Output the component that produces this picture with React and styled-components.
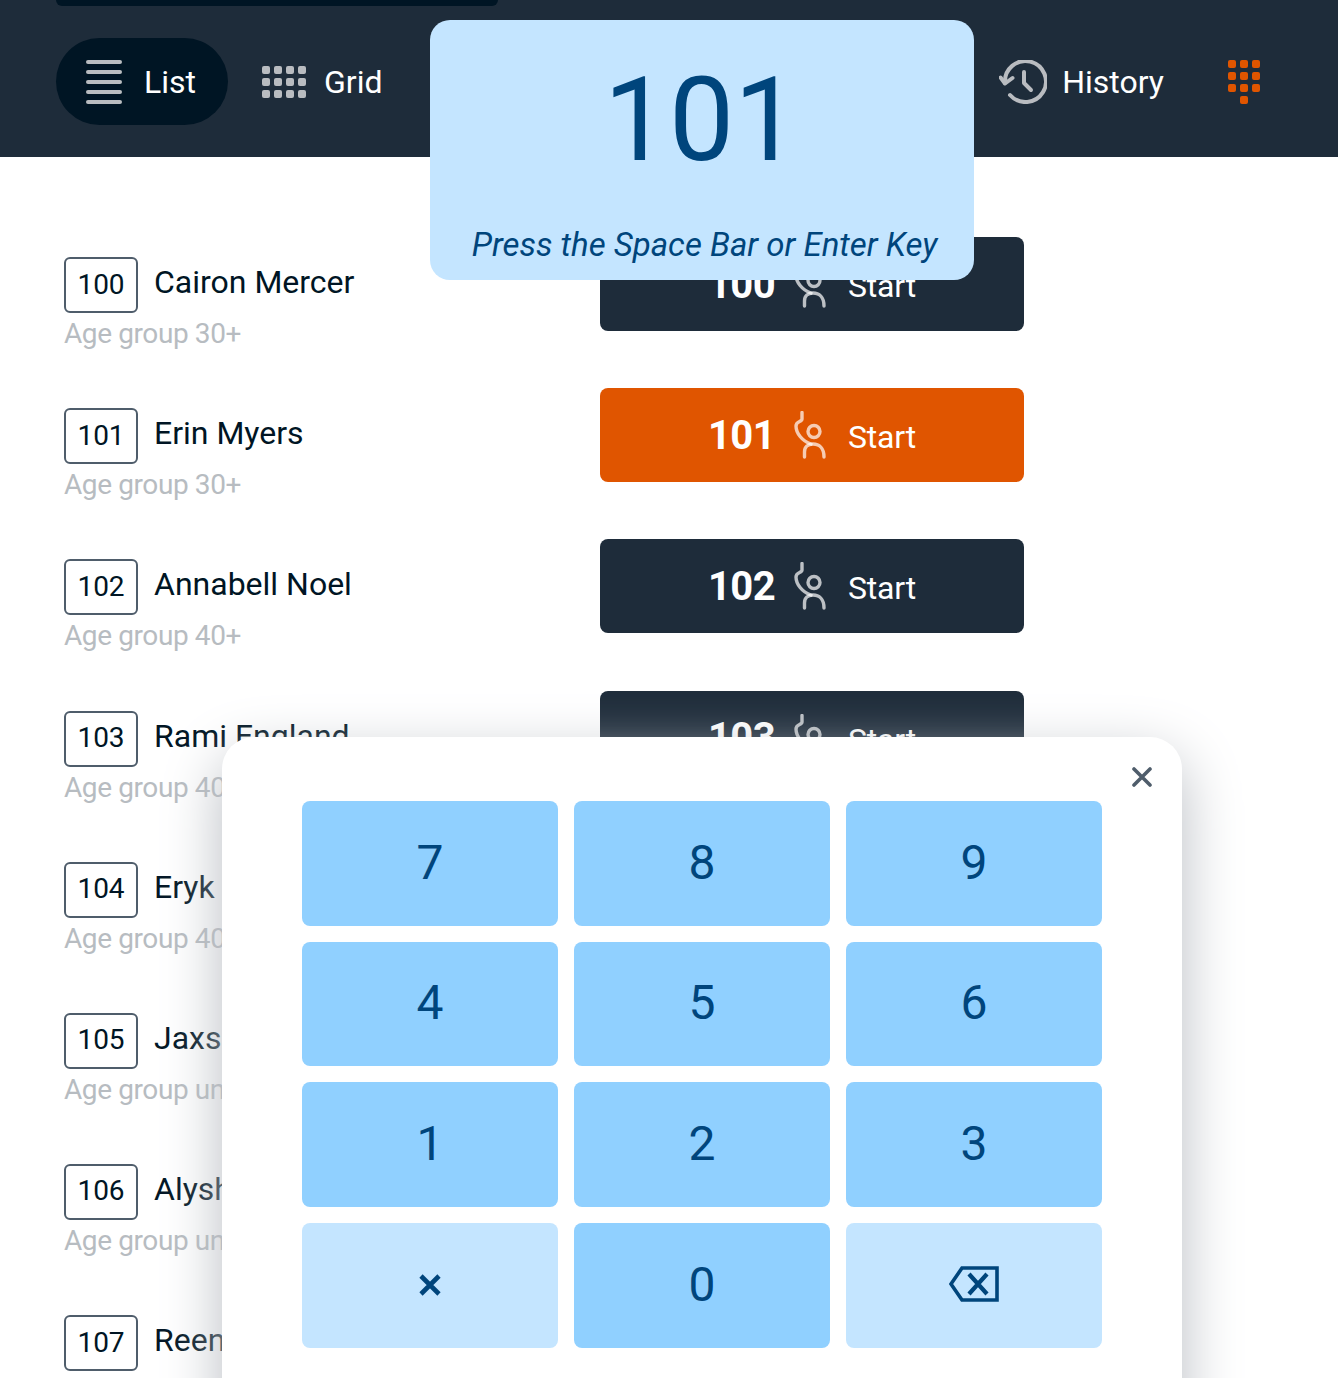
import React from 'react';
import styled, { createGlobalStyle } from 'styled-components';

const Global = createGlobalStyle`
  html, body { margin: 0; padding: 0; background: #fff; }
  * { box-sizing: border-box; }
`;

const Page = styled.div`
  position: relative;
  width: 1338px;
  height: 1378px;
  overflow: hidden;
  font-family: Roboto, "Liberation Sans", sans-serif;
  color: #001524;
  background: #fff;
`;

const Header = styled.header`
  height: 157px;
  background: #1e2c3a;
`;

const TopSliver = styled.div`
  width: 442px;
  height: 6px;
  margin-left: 56px;
  background: #001524;
  border-radius: 0 0 6px 6px;
`;

const Nav = styled.nav`
  display: flex;
  align-items: center;
  gap: 4px;
  padding: 32px 78px 0 56px;
`;

const Tab = styled.div`
  display: flex;
  align-items: center;
  gap: ${p => p.$gap}px;
  height: 87px;
  padding: 0 32px 0 30px;
  border-radius: 44px;
  font-size: 32px;
  color: #fff;
  background: ${p => (p.$active ? '#001524' : 'transparent')};
  margin-left: ${p => (p.$push ? 'auto' : '0')};
`;

const DialWrap = styled.div`
  display: flex;
  margin-left: 28px;
`;

const List = styled.main`
  display: grid;
  grid-auto-rows: 151.14px;
  padding: 80.2px 0 0 64px;
`;

const Row = styled.div`
  display: flex;
  align-items: flex-start;
`;

const Info = styled.div`
  width: 536px;
  padding-top: 20px;
`;

const NameLine = styled.div`
  display: flex;
  align-items: flex-start;
  gap: 16px;
`;

const Badge = styled.div`
  display: flex;
  align-items: center;
  justify-content: center;
  width: 74px;
  height: 56px;
  padding-bottom: 2px;
  border: 2px solid #4f5d6b;
  border-radius: 6px;
  font-size: 28px;
`;

const Name = styled.div`
  font-size: 32px;
  line-height: 50px;
`;

const Age = styled.div`
  font-size: 28px;
  letter-spacing: -0.4px;
  line-height: 40px;
  margin-top: 1px;
  color: #b7bcc1;
`;

const StartButton = styled.div`
  display: flex;
  align-items: center;
  justify-content: center;
  gap: 17px;
  width: 424px;
  height: 94px;
  border-radius: 8px;
  color: #fff;
  background: ${p => (p.$active ? '#e05500' : '#1e2c3a')};
`;

const Bib = styled.span`
  font-size: 40px;
  font-weight: 700;
  letter-spacing: -0.6px;
  margin-right: 1px;
`;

const StartLabel = styled.span`
  font-size: 32px;
  letter-spacing: -0.2px;
  margin: 4px 0 0 4px;
`;

const Display = styled.div`
  position: absolute;
  left: 430px;
  top: 20px;
  display: flex;
  flex-direction: column;
  align-items: center;
  width: 544px;
  height: 260px;
  border-radius: 20px;
  background: #c4e5ff;
  color: #00457c;
`;

const DisplayNumber = styled.div`
  font-size: 116px;
  line-height: 140px;
  margin-top: 30px;
  margin-right: 1px;
`;

const Prompt = styled.div`
  font-size: 33px;
  font-style: italic;
  line-height: 40px;
  margin-top: 35px;
  margin-left: 5px;
`;

const Panel = styled.section`
  position: absolute;
  left: 222px;
  top: 737px;
  width: 960px;
  height: 700px;
  padding: 64px 80px;
  border-radius: 32px;
  background: #fff;
  box-shadow: 0 20px 60px #b8bcc2;
`;

const Close = styled.div`
  position: absolute;
  right: 30px;
  top: 30px;
  display: flex;
`;

const Keys = styled.div`
  display: grid;
  grid-template-columns: repeat(3, 256px);
  grid-auto-rows: 124.67px;
  gap: 16px;
`;

const Key = styled.div`
  display: flex;
  align-items: center;
  justify-content: center;
  padding-bottom: 2px;
  border-radius: 8px;
  font-size: 48px;
  color: #00457c;
  background: ${p => (p.$light ? '#c4e5ff' : '#90d0ff')};
`;

const ClearMark = styled.svg`
  margin-top: 2px;
`;

const ListIcon = () => (
  <svg width="36" height="44" viewBox="0 0 36 44" fill="#b9bcc0">
    {[0, 10, 20, 30, 40].map(y => <rect key={y} x="0" y={y} width="36" height="4" rx="2" />)}
  </svg>
);

const GridIcon = () => (
  <svg width="44" height="32" viewBox="0 0 44 32" fill="#b9bcc0">
    {[0, 12, 24].flatMap(y => [0, 12, 24, 36].map(x => <rect key={`${x}-${y}`} x={x} y={y} width="8" height="8" rx="2" />))}
  </svg>
);

const HistoryIcon = () => (
  <svg width="48" height="44" viewBox="0 0 48 44" fill="none" stroke="#b9bcc0" strokeWidth="4" strokeLinecap="round" strokeLinejoin="round">
    <path d="M6 23 A20.5 20.5 0 1 1 11 35" />
    <path d="M1.5 17.5 L6 23.5 L13.5 18" />
    <path d="M25 12 V23 L32 30" />
  </svg>
);

const DialIcon = () => (
  <svg width="32" height="44" viewBox="0 0 32 44" fill="#e05500">
    {[0, 12, 24].flatMap(y => [0, 12, 24].map(x => <rect key={`${x}-${y}`} x={x} y={y} width="8" height="8" rx="2" />))}
    <rect x="12" y="36" width="8" height="8" rx="2" />
  </svg>
);

const Climber = () => (
  <svg width="34" height="48" viewBox="0 0 34 48" fill="none" stroke="#fff" strokeOpacity="0.7" strokeWidth="3.4" strokeLinecap="round" strokeLinejoin="round">
    <path d="M9 1.5 V8 C9 11 3 10 3 15 C3 22 9 30 18 33" />
    <circle cx="21" cy="20.5" r="6" />
    <path d="M11.5 46 V41 C11.5 36 15 33 20 33 C26 33 31 37 31 46" />
  </svg>
);

const CloseIcon = () => (
  <svg width="20" height="20" viewBox="0 0 20 20" fill="none" stroke="#4f5d6b" strokeWidth="3.6" strokeLinecap="round">
    <path d="M2 2 L18 18 M18 2 L2 18" />
  </svg>
);

const ClearIcon = () => (
  <ClearMark width="22" height="22" viewBox="0 0 22 22" fill="none" stroke="#00457c" strokeWidth="4.6">
    <path d="M2 2 L20 20 M20 2 L2 20" />
  </ClearMark>
);

const BackspaceIcon = () => (
  <svg width="50" height="36" viewBox="0 0 50 36" fill="none" stroke="#00457c">
    <path d="M2 18 L13 2 H48 V34 H13 Z" strokeWidth="3.6" />
    <path d="M20 8 L38 28 M38 8 L20 28" strokeWidth="4.2" />
  </svg>
);

const riders = [
  ['100', 'Cairon Mercer', 'Age group 30+'],
  ['101', 'Erin Myers', 'Age group 30+'],
  ['102', 'Annabell Noel', 'Age group 40+'],
  ['103', 'Rami England', 'Age group 40+'],
  ['104', 'Eryk Bender', 'Age group 40+'],
  ['105', 'Jaxson Rowe', 'Age group under 30'],
  ['106', 'Alysha Reid', 'Age group under 30'],
  ['107', 'Reena Lowe', 'Age group under 30'],
];

const digits = ['7', '8', '9', '4', '5', '6', '1', '2', '3'];

export default function App() {
  return (
    <Page>
      <Global />
      <Header>
        <TopSliver />
        <Nav>
          <Tab $active $gap={22}><ListIcon />List</Tab>
          <Tab $gap={18}><GridIcon />Grid</Tab>
          <Tab $push $gap={15}><HistoryIcon />History</Tab>
          <DialWrap><DialIcon /></DialWrap>
        </Nav>
      </Header>
      <List>
        {riders.map(([bib, name, age]) => (
          <Row key={bib}>
            <Info>
              <NameLine>
                <Badge>{bib}</Badge>
                <Name>{name}</Name>
              </NameLine>
              <Age>{age}</Age>
            </Info>
            <StartButton $active={bib === '101'}>
              <Bib>{bib}</Bib>
              <Climber />
              <StartLabel>Start</StartLabel>
            </StartButton>
          </Row>
        ))}
      </List>
      <Display>
        <DisplayNumber>101</DisplayNumber>
        <Prompt>Press the Space Bar or Enter Key</Prompt>
      </Display>
      <Panel>
        <Close><CloseIcon /></Close>
        <Keys>
          {digits.map(d => <Key key={d}>{d}</Key>)}
          <Key $light><ClearIcon /></Key>
          <Key>0</Key>
          <Key $light><BackspaceIcon /></Key>
        </Keys>
      </Panel>
    </Page>
  );
}
